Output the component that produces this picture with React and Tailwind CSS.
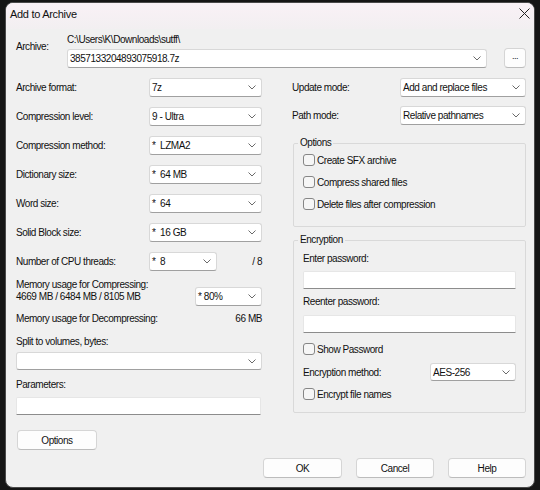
import React from "react";

const Chevron = () => (
  <svg width="8" height="5" viewBox="0 0 8 5" className="shrink-0">
    <path d="M0.5 0.5 L4 4 L7.5 0.5" fill="none" stroke="#6a6a6a" strokeWidth="1" />
  </svg>
);

const Combo = ({ value = "", className = "" }) => (
  <div
    className={`flex items-center justify-between bg-white border border-[#d8d8d8] border-b-[#a0a0a0] rounded-[3px] pl-[2px] pr-[5px] ${className}`}
  >
    <span className="whitespace-pre">{value}</span>
    <Chevron />
  </div>
);

const Check = ({ label }) => (
  <label className="flex items-center h-[14px] gap-[2px]">
    <span className="w-[12px] h-[12px] rounded-[3px] border border-[#868686] bg-[#f6f6f6]" />
    <span>{label}</span>
  </label>
);

const TextBox = () => (
  <div className="h-[18px] bg-white border border-[#e6e6e6] border-b-[#8c8c8c] rounded-t-[2px]" />
);

const Btn = ({ children, className = "" }) => (
  <button
    className={`h-[20px] bg-[#fdfdfd] border border-[#d5d5d5] border-b-[#bcbcbc] rounded-[4px] ${className}`}
  >
    {children}
  </button>
);

const Row = ({ label, value }) => (
  <div className="flex items-center h-[19px] mb-[10px]">
    <span className="flex-1">{label}</span>
    <Combo value={value} className="w-[113px] h-[19px]" />
  </div>
);

export default function App() {
  return (
    <div className="w-[540px] h-[490px] bg-[#151515] pt-[2px] pl-[5px] overflow-hidden font-['Liberation_Sans',Arial,sans-serif] text-[10px] tracking-[-0.45px] text-[#111]">
      <div className="w-[530px] h-[486px] bg-[#f0f0f0] border border-[#4a4a4a] rounded-[8px] overflow-hidden">
        {/* title bar */}
        <div className="h-[26px] flex items-start justify-between pl-[4px] pr-[4px] pt-[5px] bg-gradient-to-b from-[#f9f1f6] to-[#f2eff1]">
          <span className="text-[11px] leading-[12px] tracking-[-0.3px]">Add to Archive</span>
          <svg width="11" height="11" viewBox="0 0 11 11">
            <path d="M0.5 0.5 L10.5 10.5 M10.5 0.5 L0.5 10.5" stroke="#222" strokeWidth="1" />
          </svg>
        </div>

        <div className="pl-[10px] pr-[8px]">
          {/* archive */}
          <div className="flex">
            <span className="w-[51px] mt-[12px] leading-[12px]">Archive:</span>
            <div className="flex-1">
              <div className="mt-[5px] leading-[12px]">C:\Users\K\Downloads\sutff\</div>
              <div className="flex items-center mt-[3px] gap-[17px]">
                <Combo value="3857133204893075918.7z" className="flex-1 h-[19px] border-[#c4c4c4] border-b-[#8a8a8a]" />
                <Btn className="w-[22px] h-[20px] -mt-[1px] text-[9px] pb-[3px]">...</Btn>
              </div>
            </div>
          </div>

          {/* main columns */}
          <div className="flex gap-[30px] mt-[10px]">
            <div className="w-[246px] flex flex-col">
              <Row label="Archive format:" value="7z" />
              <Row label="Compression level:" value="9 - Ultra" />
              <Row label="Compression method:" value="*  LZMA2" />
              <Row label="Dictionary size:" value="*  64 MB" />
              <Row label="Word size:" value="*  64" />
              <Row label="Solid Block size:" value="*  16 GB" />
              <div className="flex items-center h-[19px]">
                <span className="w-[133px]">Number of CPU threads:</span>
                <Combo value="*  8" className="w-[68px] h-[19px]" />
                <span className="flex-1 text-right">/ 8</span>
              </div>
              <div className="flex items-start mt-[8px]">
                <div className="flex-1 leading-[12px]">
                  <div>Memory usage for Compressing:</div>
                  <div>4669 MB / 6484 MB / 8105 MB</div>
                </div>
                <Combo value="* 80%" className="w-[67px] h-[19px] mt-[8px]" />
              </div>
              <div className="flex justify-between leading-[12px] mt-[7px]">
                <span>Memory usage for Decompressing:</span>
                <span>66 MB</span>
              </div>
              <div className="leading-[12px] mt-[11px]">Split to volumes, bytes:</div>
              <Combo className="h-[18px] mt-[4px] border-[#c4c4c4] border-b-[#8a8a8a]" />
              <div className="leading-[12px] mt-[9px]">Parameters:</div>
              <div className="mt-[6px] mr-[1px]">
                <TextBox />
              </div>
              <Btn className="w-[80px] mt-[15px] ml-[1px]">Options</Btn>
            </div>

            <div className="w-[234px] flex flex-col">
              <div className="flex items-center h-[19px]">
                <span className="flex-1">Update mode:</span>
                <Combo value="Add and replace files" className="w-[126px] h-[19px]" />
              </div>
              <div className="flex items-center h-[19px] mt-[9px]">
                <span className="flex-1">Path mode:</span>
                <Combo value="Relative pathnames" className="w-[126px] h-[19px]" />
              </div>

              <fieldset className="mt-[12px] ml-[1px] border border-[#d9d9d9] rounded-[2px] pl-[9px] pr-[9px] pb-[15px]">
                <legend className="-ml-[5px] px-[2px] leading-[12px]">Options</legend>
                <div className="flex flex-col gap-[8px] pt-[4px]">
                  <Check label="Create SFX archive" />
                  <Check label="Compress shared files" />
                  <Check label="Delete files after compression" />
                </div>
              </fieldset>

              <fieldset className="mt-[7px] ml-[1px] border border-[#d9d9d9] rounded-[2px] pl-[9px] pr-[9px] pb-[11px]">
                <legend className="-ml-[5px] px-[2px] leading-[12px]">Encryption</legend>
                <div className="leading-[12px] mt-[7px]">Enter password:</div>
                <div className="mt-[6px]">
                  <TextBox />
                </div>
                <div className="leading-[12px] mt-[7px]">Reenter password:</div>
                <div className="mt-[7px]">
                  <TextBox />
                </div>
                <div className="mt-[9px]">
                  <Check label="Show Password" />
                </div>
                <div className="flex items-center mt-[7px]">
                  <span className="flex-1">Encryption method:</span>
                  <Combo value="AES-256" className="w-[86px] h-[18px]" />
                </div>
                <div className="mt-[6px]">
                  <Check label="Encrypt file names" />
                </div>
              </fieldset>
            </div>
          </div>

          {/* bottom buttons */}
          <div className="flex justify-end gap-[14px] mt-[8px]">
            <Btn className="w-[79px] border-[#7ea0cf] border-b-[#5f87c2]">OK</Btn>
            <Btn className="w-[78px]">Cancel</Btn>
            <Btn className="w-[78px]">Help</Btn>
          </div>
        </div>
      </div>
    </div>
  );
}
